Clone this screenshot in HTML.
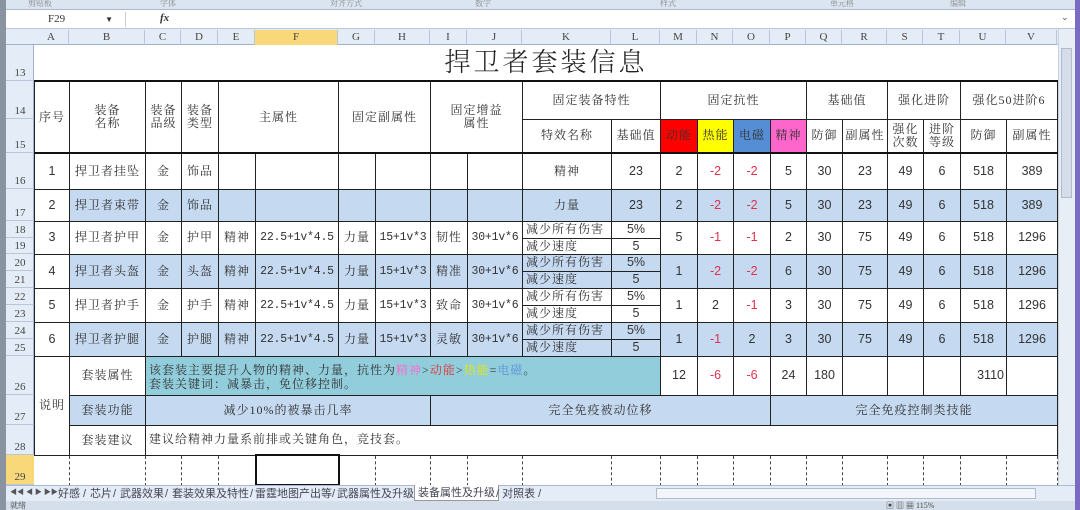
<!DOCTYPE html>
<html><head><meta charset="utf-8"><style>
*{margin:0;padding:0;box-sizing:border-box}
body{width:1080px;height:510px;overflow:hidden;background:#fff;position:relative;font-family:"Liberation Serif","Noto Serif CJK SC",serif;color:#333}
.abs{position:absolute}
table{position:absolute;left:34px;top:45px;border-collapse:collapse;table-layout:fixed}
td{border:1px solid #222;text-align:center;vertical-align:middle;font-size:12px;line-height:13px;padding:0;overflow:hidden;white-space:nowrap;letter-spacing:1px}
.b{background:#c5d9f1}
.t{background:#92cddc}
.r{color:#e0304a}
.n{font-family:"Liberation Sans",sans-serif;font-size:12.5px;letter-spacing:0}
.f{font-family:"Liberation Mono","Noto Serif CJK SC",monospace;font-size:11.5px;letter-spacing:-0.2px}
.l{text-align:left;padding-left:3px}
.d td{border:1px dashed #444;border-top:1px solid #222}
.ch{position:absolute;top:30px;height:15px;font-size:11px;color:#444;text-align:center;line-height:15px;border-right:1px solid #b8c6d8}
.rh{position:absolute;left:6px;width:28px;font-size:11px;color:#444;text-align:center;border-bottom:1px solid #b8c6d8;display:flex;align-items:flex-end;justify-content:center;padding-bottom:1px}
.tab{position:absolute;top:1px}
</style></head><body>
<div class="abs" style="left:0;top:0;width:1080px;height:10px;background:#dbe5f1;border-bottom:1px solid #a9b9cf;font-size:8px;color:#888;line-height:8px">
<span class="abs" style="left:28px">剪贴板</span><span class="abs" style="left:160px">字体</span><span class="abs" style="left:330px">对齐方式</span><span class="abs" style="left:475px">数字</span><span class="abs" style="left:660px">样式</span><span class="abs" style="left:830px">单元格</span><span class="abs" style="left:950px">编辑</span></div>
<div class="abs" style="left:0;top:10px;width:1075px;height:19px;background:#fff;border-bottom:1px solid #b8c6d8"></div>
<div class="abs" style="left:6px;top:12px;width:120px;height:15px;font-size:11px;line-height:15px;padding-left:42px;border-right:1px solid #ccc">F29<span style="margin-left:40px;font-size:8px">▼</span></div>
<div class="abs" style="left:160px;top:12px;font-size:11px;font-style:italic;font-weight:bold">fx</div>
<div class="abs" style="left:1061px;top:12px;font-size:9px;color:#555">⌄</div>
<div class="abs" style="left:0;top:29px;width:1058px;height:16px;background:#e4ecf7;border-bottom:1px solid #9fb2c9"></div>
<div class="abs" style="left:0;top:0;width:6px;height:510px;background:#8a93a0"></div>
<div class="abs" style="left:6px;top:45px;width:28px;height:440px;background:#e4ecf7;border-right:1px solid #9fb2c9"></div>
<div class="ch" style="left:34px;width:35px">A</div><div class="ch" style="left:69px;width:76px">B</div><div class="ch" style="left:145px;width:36px">C</div><div class="ch" style="left:181px;width:37px">D</div><div class="ch" style="left:218px;width:37px">E</div><div class="ch" style="left:255px;width:83px;background:#f8d878">F</div><div class="ch" style="left:338px;width:37px">G</div><div class="ch" style="left:375px;width:55px">H</div><div class="ch" style="left:430px;width:37px">I</div><div class="ch" style="left:467px;width:55px">J</div><div class="ch" style="left:522px;width:89px">K</div><div class="ch" style="left:611px;width:49px">L</div><div class="ch" style="left:660px;width:37px">M</div><div class="ch" style="left:697px;width:36px">N</div><div class="ch" style="left:733px;width:37px">O</div><div class="ch" style="left:770px;width:36px">P</div><div class="ch" style="left:806px;width:36px">Q</div><div class="ch" style="left:842px;width:45px">R</div><div class="ch" style="left:887px;width:36px">S</div><div class="ch" style="left:923px;width:37px">T</div><div class="ch" style="left:960px;width:46px">U</div><div class="ch" style="left:1006px;width:51px">V</div>
<div class="rh" style="top:45px;height:36px">13</div><div class="rh" style="top:81px;height:38px">14</div><div class="rh" style="top:119px;height:34px">15</div><div class="rh" style="top:153px;height:36px">16</div><div class="rh" style="top:189px;height:32px">17</div><div class="rh" style="top:221px;height:17px">18</div><div class="rh" style="top:238px;height:16px">19</div><div class="rh" style="top:254px;height:17px">20</div><div class="rh" style="top:271px;height:17px">21</div><div class="rh" style="top:288px;height:17px">22</div><div class="rh" style="top:305px;height:17px">23</div><div class="rh" style="top:322px;height:17px">24</div><div class="rh" style="top:339px;height:17px">25</div><div class="rh" style="top:356px;height:39px">26</div><div class="rh" style="top:395px;height:30px">27</div><div class="rh" style="top:425px;height:30px">28</div><div class="rh" style="top:455px;height:30px;background:#f8d878">29</div>
<table>
<colgroup><col style="width:35px"><col style="width:76px"><col style="width:36px"><col style="width:37px"><col style="width:37px"><col style="width:83px"><col style="width:37px"><col style="width:55px"><col style="width:37px"><col style="width:55px"><col style="width:89px"><col style="width:49px"><col style="width:37px"><col style="width:36px"><col style="width:37px"><col style="width:36px"><col style="width:36px"><col style="width:45px"><col style="width:36px"><col style="width:37px"><col style="width:46px"><col style="width:51px"></colgroup>
<tr style="height:36px"><td colspan="22" style="border:none;border-bottom:2px solid #111;font-size:26px;line-height:32px;letter-spacing:3px;color:#222;font-weight:300">捍卫者套装信息</td></tr>
<tr style="height:38px"><td rowspan="2">序号</td><td rowspan="2">装备<br>名称</td><td rowspan="2">装备<br>品级</td><td rowspan="2">装备<br>类型</td><td rowspan="2" colspan="2">主属性</td><td rowspan="2" colspan="2">固定副属性</td><td rowspan="2" colspan="2">固定增益<br>属性</td><td colspan="2">固定装备特性</td><td colspan="4">固定抗性</td><td colspan="2">基础值</td><td colspan="2">强化进阶</td><td colspan="2">强化50进阶6</td></tr>
<tr style="height:34px;border-bottom:2px solid #111"><td>特效名称</td><td>基础值</td><td style="background:#ff0000">动能</td><td style="background:#ffff00">热能</td><td style="background:#558ed5">电磁</td><td style="background:#ff66cc">精神</td><td>防御</td><td>副属性</td><td>强化<br>次数</td><td>进阶<br>等级</td><td>防御</td><td>副属性</td></tr>
<tr style="height:36px"><td class="n">1</td><td>捍卫者挂坠</td><td>金</td><td>饰品</td><td></td><td></td><td></td><td></td><td></td><td></td><td>精神</td><td class="n">23</td><td class="n">2</td><td class="n r">-2</td><td class="n r">-2</td><td class="n">5</td><td class="n">30</td><td class="n">23</td><td class="n">49</td><td class="n">6</td><td class="n">518</td><td class="n">389</td></tr>
<tr style="height:32px" class="b"><td class="n" style="background:#fff">2</td><td class="b">捍卫者束带</td><td class="b">金</td><td class="b">饰品</td><td class="b"></td><td class="b"></td><td class="b"></td><td class="b"></td><td class="b"></td><td class="b"></td><td class="b">力量</td><td class="n b">23</td><td class="n b">2</td><td class="n r b">-2</td><td class="n r b">-2</td><td class="n b">5</td><td class="n b">30</td><td class="n b">23</td><td class="n b">49</td><td class="n b">6</td><td class="n b">518</td><td class="n b">389</td></tr>
<tr style="height:17px"><td rowspan="2" class="n">3</td><td rowspan="2">捍卫者护甲</td><td rowspan="2">金</td><td rowspan="2">护甲</td><td rowspan="2">精神</td><td rowspan="2" class="f">22.5+1v*4.5</td><td rowspan="2">力量</td><td rowspan="2" class="f">15+1v*3</td><td rowspan="2">韧性</td><td rowspan="2" class="f">30+1v*6</td><td class="l">减少所有伤害</td><td class="n">5%</td><td rowspan="2" class="n">5</td><td rowspan="2" class="n r">-1</td><td rowspan="2" class="n r">-1</td><td rowspan="2" class="n">2</td><td rowspan="2" class="n">30</td><td rowspan="2" class="n">75</td><td rowspan="2" class="n">49</td><td rowspan="2" class="n">6</td><td rowspan="2" class="n">518</td><td rowspan="2" class="n">1296</td></tr>
<tr style="height:16px"><td class="l">减少速度</td><td class="n">5</td></tr>
<tr style="height:17px"><td rowspan="2" class="n">4</td><td rowspan="2" class="b">捍卫者头盔</td><td rowspan="2" class="b">金</td><td rowspan="2" class="b">头盔</td><td rowspan="2" class="b">精神</td><td rowspan="2" class="f b">22.5+1v*4.5</td><td rowspan="2" class="b">力量</td><td rowspan="2" class="f b">15+1v*3</td><td rowspan="2" class="b">精准</td><td rowspan="2" class="f b">30+1v*6</td><td class="l b">减少所有伤害</td><td class="n b">5%</td><td rowspan="2" class="n b">1</td><td rowspan="2" class="n r b">-2</td><td rowspan="2" class="n r b">-2</td><td rowspan="2" class="n b">6</td><td rowspan="2" class="n b">30</td><td rowspan="2" class="n b">75</td><td rowspan="2" class="n b">49</td><td rowspan="2" class="n b">6</td><td rowspan="2" class="n b">518</td><td rowspan="2" class="n b">1296</td></tr>
<tr style="height:17px"><td class="l b">减少速度</td><td class="n b">5</td></tr>
<tr style="height:17px"><td rowspan="2" class="n">5</td><td rowspan="2">捍卫者护手</td><td rowspan="2">金</td><td rowspan="2">护手</td><td rowspan="2">精神</td><td rowspan="2" class="f">22.5+1v*4.5</td><td rowspan="2">力量</td><td rowspan="2" class="f">15+1v*3</td><td rowspan="2">致命</td><td rowspan="2" class="f">30+1v*6</td><td class="l">减少所有伤害</td><td class="n">5%</td><td rowspan="2" class="n">1</td><td rowspan="2" class="n">2</td><td rowspan="2" class="n r">-1</td><td rowspan="2" class="n">3</td><td rowspan="2" class="n">30</td><td rowspan="2" class="n">75</td><td rowspan="2" class="n">49</td><td rowspan="2" class="n">6</td><td rowspan="2" class="n">518</td><td rowspan="2" class="n">1296</td></tr>
<tr style="height:17px"><td class="l">减少速度</td><td class="n">5</td></tr>
<tr style="height:17px"><td rowspan="2" class="n">6</td><td rowspan="2" class="b">捍卫者护腿</td><td rowspan="2" class="b">金</td><td rowspan="2" class="b">护腿</td><td rowspan="2" class="b">精神</td><td rowspan="2" class="f b">22.5+1v*4.5</td><td rowspan="2" class="b">力量</td><td rowspan="2" class="f b">15+1v*3</td><td rowspan="2" class="b">灵敏</td><td rowspan="2" class="f b">30+1v*6</td><td class="l b">减少所有伤害</td><td class="n b">5%</td><td rowspan="2" class="n b">1</td><td rowspan="2" class="n r b">-1</td><td rowspan="2" class="n b">2</td><td rowspan="2" class="n b">3</td><td rowspan="2" class="n b">30</td><td rowspan="2" class="n b">75</td><td rowspan="2" class="n b">49</td><td rowspan="2" class="n b">6</td><td rowspan="2" class="n b">518</td><td rowspan="2" class="n b">1296</td></tr>
<tr style="height:17px"><td class="l b">减少速度</td><td class="n b">5</td></tr>
<tr style="height:39px"><td rowspan="3">说明</td><td>套装属性</td><td colspan="10" class="t l" style="vertical-align:top;padding-top:6px;line-height:14px">该套装主要提升人物的精神、力量，抗性为<span style="color:#ff66cc">精神</span>&gt;<span style="color:#e03030">动能</span>&gt;<span style="color:#e8e800">热能</span>=<span style="color:#5b8fd6">电磁</span>。<br>套装关键词：减暴击，免位移控制。</td><td class="n">12</td><td class="n r">-6</td><td class="n r">-6</td><td class="n">24</td><td class="n">180</td><td></td><td></td><td></td><td class="n" style="text-align:right;padding-right:2px">3110</td><td></td></tr>
<tr style="height:30px"><td class="b">套装功能</td><td colspan="6" class="b">减少10%的被暴击几率</td><td colspan="7" class="b">完全免疫被动位移</td><td colspan="7" class="b">完全免疫控制类技能</td></tr>
<tr style="height:30px"><td>套装建议</td><td colspan="20" class="l">建议给精神力量系前排或关键角色，竞技套。</td></tr>
<tr style="height:30px" class="d"><td style="border-left:none"></td><td></td><td></td><td></td><td></td><td style="border:2px solid #111"></td><td></td><td></td><td></td><td></td><td></td><td></td><td></td><td></td><td></td><td></td><td></td><td></td><td></td><td></td><td></td><td></td></tr>
</table>
<div class="abs" style="left:1058px;top:29px;width:17px;height:456px;background:#e8eef6;border-left:1px solid #c8d2de"></div>
<div class="abs" style="left:1061px;top:48px;width:11px;height:150px;background:#d4dde9;border:1px solid #b0bccc"></div>
<div class="abs" style="left:1075px;top:0;width:5px;height:510px;background:#7a6cc0"></div>
<div class="abs" style="left:6px;top:485px;width:1069px;height:16px;background:#e4ecf7;border-top:1px solid #a9b9cf;font-size:11px;line-height:14px;color:#445;font-family:'Liberation Sans','Noto Sans CJK SC',sans-serif">
<span class="abs" style="left:4px;font-size:7px;color:#555">◀◀ ◀ ▶ ▶▶</span>
<span class="tab" style="left:52px">好感</span><span class="tab" style="left:77px">/</span><span class="tab" style="left:84px">芯片</span><span class="tab" style="left:107px">/</span><span class="tab" style="left:114px">武器效果</span><span class="tab" style="left:159px">/</span><span class="tab" style="left:166px">套装效果及特性</span><span class="tab" style="left:244px">/</span><span class="tab" style="left:249px">雷霆地图产出等</span><span class="tab" style="left:326px">/</span><span class="tab" style="left:331px">武器属性及升级</span>
<span class="tab" style="left:408px;top:-1px;background:#fff;padding:1px 3px 0;border:1px solid #999;border-top:none;height:16px">装备属性及升级</span>
<span class="tab" style="left:490px">/ 对照表 /</span>
<div class="abs" style="left:650px;top:2px;width:380px;height:11px;background:#f2f5fa;border:1px solid #b0bccc"></div>
</div>
<div class="abs" style="left:6px;top:501px;width:1069px;height:9px;background:#d5dfeb;font-size:8px;color:#444;line-height:9px"><span style="margin-left:4px">就绪</span><span class="abs" style="left:880px">▣ ▥ ▦ 115%</span></div>
</body></html>
